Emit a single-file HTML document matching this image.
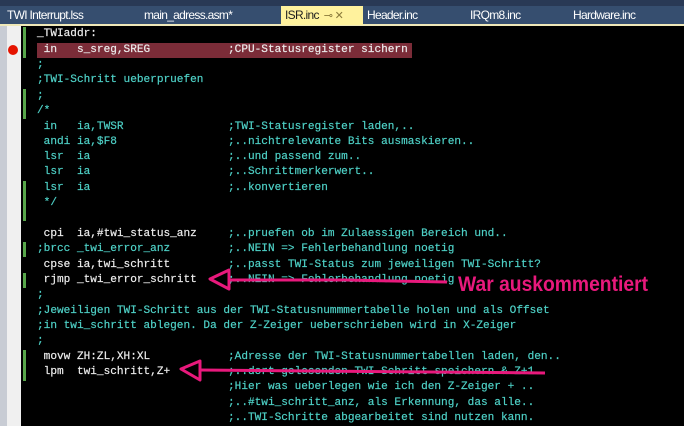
<!DOCTYPE html>
<html><head><meta charset="utf-8"><style>
*{margin:0;padding:0;box-sizing:border-box}
body{width:684px;height:426px;overflow:hidden;background:#000;position:relative;font-family:"Liberation Mono",monospace}
.top{position:absolute;left:0;top:0;width:684px;height:6px;background:#293955}
.tabs{position:absolute;left:0;top:6px;width:684px;height:19px;background:#364e6f}
.ul{position:absolute;left:0;top:24px;width:684px;height:2px;background:#efe8b8}
.tab{position:absolute;top:6px;height:19px;line-height:19px;font-family:"Liberation Sans",sans-serif;font-size:12px;color:#fff;letter-spacing:-0.7px}
.act{background:#fff29d;color:#1e1e1e}
.gut1{position:absolute;left:0;top:26px;width:7px;height:400px;background:#c8ccd4}
.gut2{position:absolute;left:7px;top:26px;width:14px;height:400px;background:#f0f0f0}
.g{position:absolute;left:23px;width:3px;background:#57a64a}
.l{position:absolute;left:37px;height:15px;line-height:15px;font-size:11.1px;white-space:pre;color:#ececec;-webkit-text-stroke:0.2px}
.c{color:#4ed0c6}
.cm{position:absolute;left:191px}
.hl{position:absolute;left:37px;top:43px;width:375px;height:15px;background:#7b2c38}
</style></head><body>
<div class="top"></div><div class="tabs"></div><div class="ul"></div>
<div class="tab" style="left:7px">TWI Interrupt.lss</div>
<div class="tab" style="left:144px">main_adress.asm*</div>
<div class="tab act" style="left:281px;width:82px;padding-left:4px">ISR.inc <span style="color:#8a7a3a;font-size:11px">&nbsp;⊸ ✕</span></div>
<div class="tab" style="left:367px">Header.inc</div>
<div class="tab" style="left:470px">IRQm8.inc</div>
<div class="tab" style="left:573px">Hardware.inc</div>
<div class="gut1"></div><div class="gut2"></div>
<div style="position:absolute;left:8px;top:45px;width:10px;height:10px;border-radius:50%;background:#e51400"></div>
<div class="g" style="top:27px;height:31px"></div>
<div class="g" style="top:89px;height:30px"></div>
<div class="g" style="top:181px;height:40px"></div>
<div class="g" style="top:242px;height:15px"></div>
<div class="g" style="top:273px;height:15px"></div>
<div class="g" style="top:350px;height:31px"></div>
<div class="hl"></div>
<div class="l" style="top:27px">_TWIaddr:</div>
<div class="l" style="top:43px"> in   s_sreg,SREG<span class="cm">;CPU-Statusregister sichern</span></div>
<div class="l c" style="top:58px">;</div>
<div class="l c" style="top:73px">;TWI-Schritt ueberpruefen</div>
<div class="l c" style="top:89px">;</div>
<div class="l c" style="top:104px">/*</div>
<div class="l c" style="top:120px"> in   ia,TWSR<span class="cm">;TWI-Statusregister laden,..</span></div>
<div class="l c" style="top:135px"> andi ia,$F8<span class="cm">;..nichtrelevante Bits ausmaskieren..</span></div>
<div class="l c" style="top:150px"> lsr  ia<span class="cm">;..und passend zum..</span></div>
<div class="l c" style="top:165px"> lsr  ia<span class="cm">;..Schrittmerkerwert..</span></div>
<div class="l c" style="top:181px"> lsr  ia<span class="cm">;..konvertieren</span></div>
<div class="l c" style="top:196px"> */</div>
<div class="l" style="top:227px"> cpi  ia,#twi_status_anz<span class="cm c">;..pruefen ob im Zulaessigen Bereich und..</span></div>
<div class="l c" style="top:242px">;brcc _twi_error_anz<span class="cm">;..NEIN =&gt; Fehlerbehandlung noetig</span></div>
<div class="l" style="top:258px"> cpse ia,twi_schritt<span class="cm c">;..passt TWI-Status zum jeweiligen TWI-Schritt?</span></div>
<div class="l" style="top:273px"> rjmp _twi_error_schritt<span class="cm c">;..NEIN =&gt; Fehlerbehandlung noetig</span></div>
<div class="l c" style="top:288px">;</div>
<div class="l c" style="top:304px">;Jeweiligen TWI-Schritt aus der TWI-Statusnummmertabelle holen und als Offset</div>
<div class="l c" style="top:319px">;in twi_schritt ablegen. Da der Z-Zeiger ueberschrieben wird in X-Zeiger</div>
<div class="l c" style="top:334px">;</div>
<div class="l" style="top:350px"> movw ZH:ZL,XH:XL<span class="cm c">;Adresse der TWI-Statusnummertabellen laden, den..</span></div>
<div class="l" style="top:365px"> lpm  twi_schritt,Z+<span class="cm c">;..dort gelesenden TWI-Schritt speichern &amp; Z+1..</span></div>
<div class="l c" style="top:380px"><span class="cm">;Hier was ueberlegen wie ich den Z-Zeiger + ..</span></div>
<div class="l c" style="top:396px"><span class="cm">;..#twi_schritt_anz, als Erkennung, das alle..</span></div>
<div class="l c" style="top:411px"><span class="cm">;..TWI-Schritte abgearbeitet sind nutzen kann.</span></div>
<svg style="position:absolute;left:0;top:0" width="684" height="426">
<g stroke="#e8197c" stroke-width="3" fill="none" stroke-linejoin="round">
<path d="M229 270 L210 279 L229 289 Z"/><path d="M229 280 L346 280 L447 282"/>
<path d="M200 361 L181 369 L200 380 Z"/><path d="M200 370 L545 373"/>
</g>
<text x="458" y="291" fill="#e8197c" font-family="Liberation Sans,sans-serif" font-weight="bold" font-size="21" textLength="190" lengthAdjust="spacingAndGlyphs">War auskommentiert</text>
</svg>
</body></html>
